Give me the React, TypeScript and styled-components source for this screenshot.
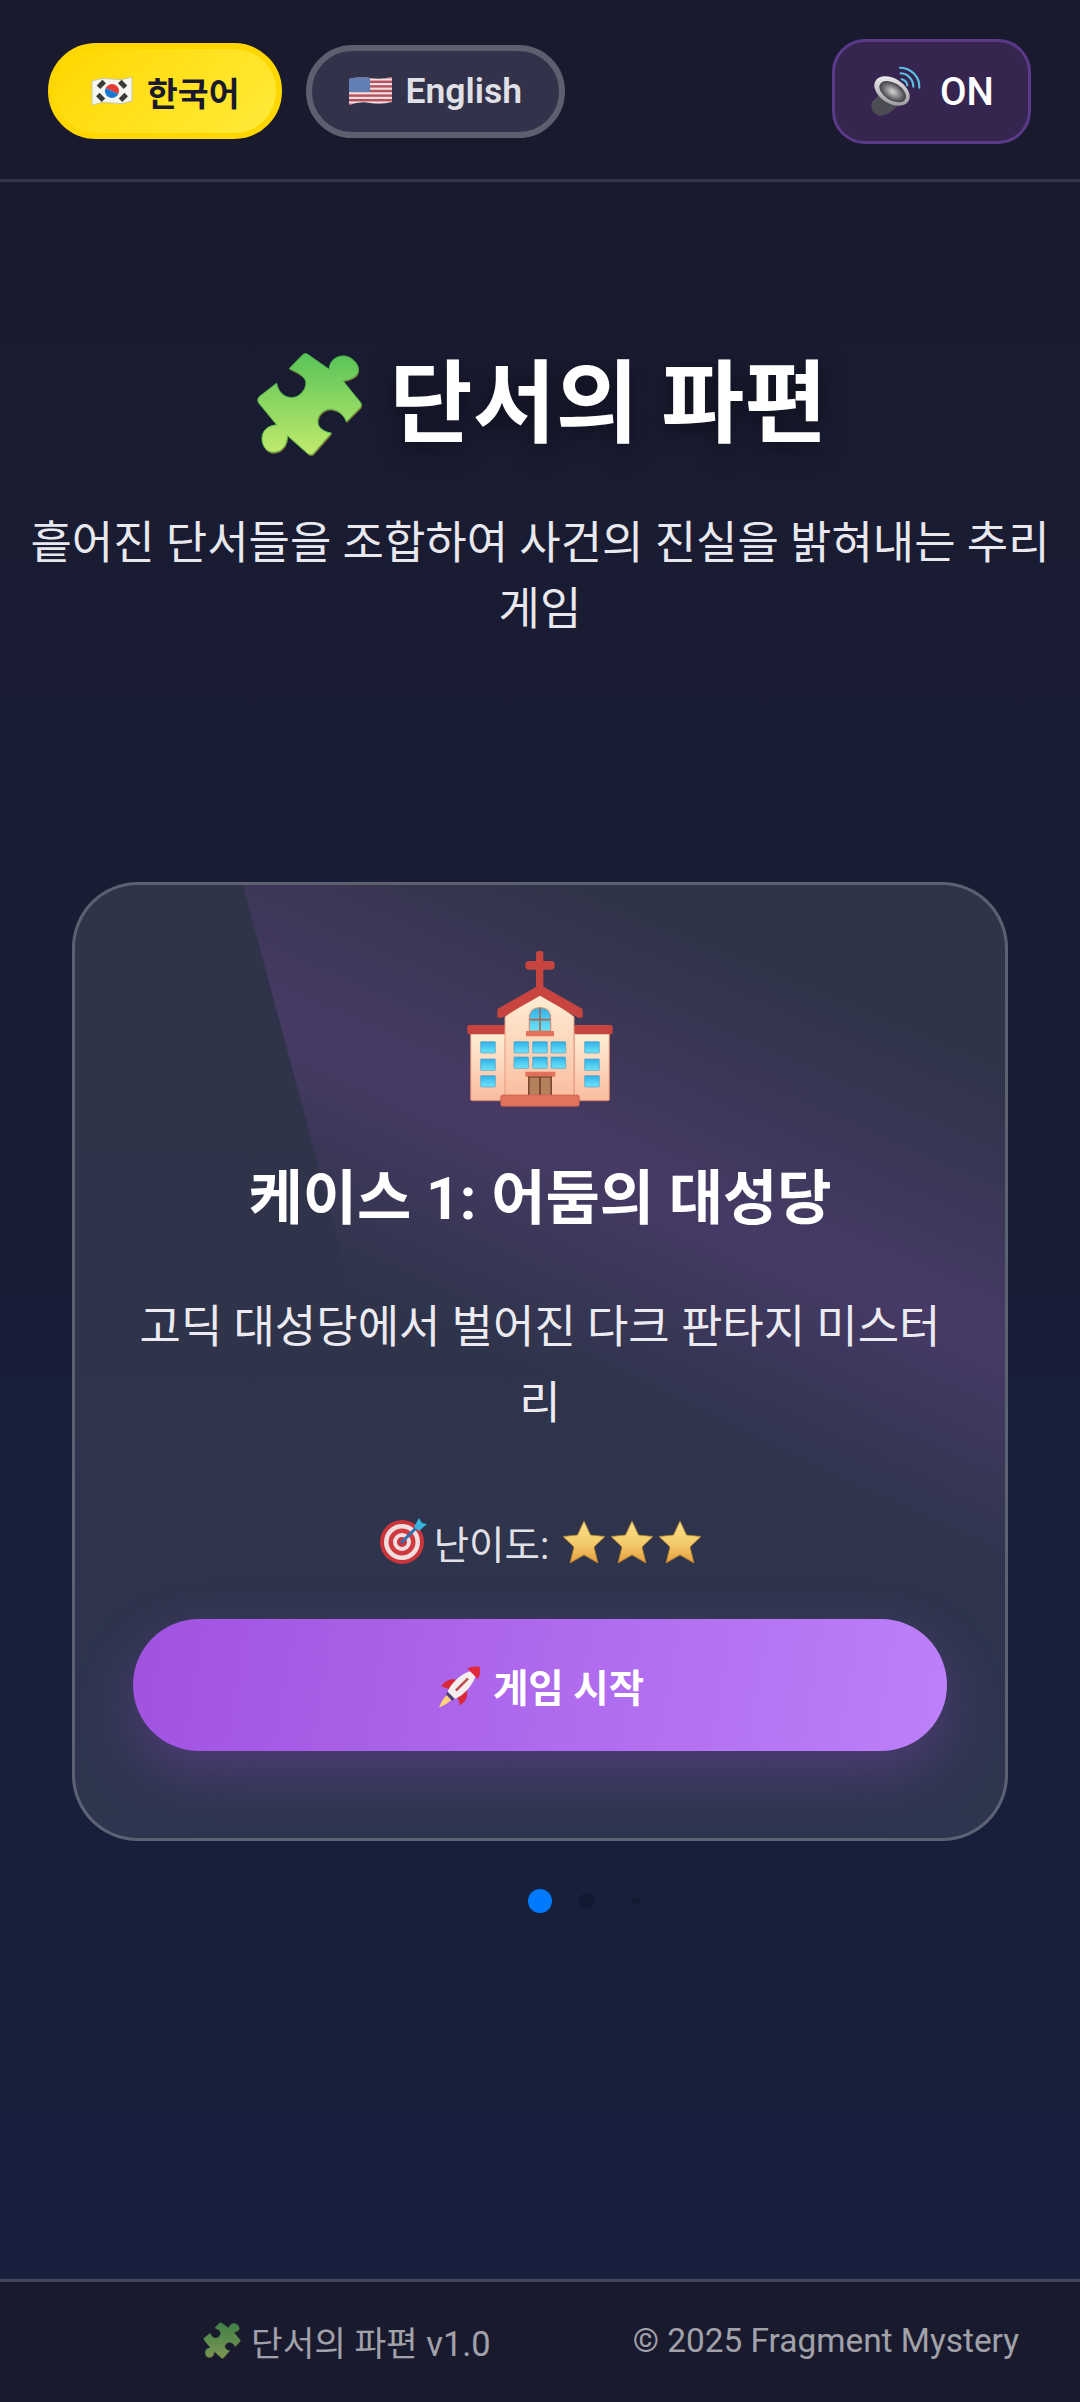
import React from 'react';
import styled, { createGlobalStyle } from 'styled-components';

const GlobalStyle = createGlobalStyle`
  html, body {
    margin: 0;
    padding: 0;
    background: #1a1a2e;
  }
  * {
    box-sizing: border-box;
  }
  body {
    font-family: Roboto, "Noto Sans CJK KR", sans-serif;
  }
`;

const Page = styled.div`
  width: 1080px;
  height: 2402px;
  display: flex;
  flex-direction: column;
  background: linear-gradient(180deg, #1a1a2e 0%, #16213e 100%);
  color: #fff;
  overflow: hidden;
`;

const Header = styled.header`
  height: 182px;
  flex-shrink: 0;
  padding: 3px 49px 0 48px;
  display: flex;
  align-items: center;
  justify-content: space-between;
  background: #1a1a2e;
  border-bottom: 3px solid #33334a;
`;

const LangGroup = styled.div`
  display: flex;
  align-items: center;
  gap: 24px;
`;

const LangButton = styled.button<{ $active?: boolean }>`
  height: ${({ $active }) => ($active ? '96px' : '93px')};
  padding: 0 37px;
  display: flex;
  align-items: center;
  gap: ${({ $active }) => ($active ? '14px' : '13px')};
  border-radius: 48px;
  font-family: inherit;
  font-size: ${({ $active }) => ($active ? '33.5px' : '35.5px')};
  font-weight: 600;
  white-space: nowrap;
  border: 6px solid ${({ $active }) => ($active ? '#ffd700' : '#5e5e6e')};
  background: ${({ $active }) =>
    $active ? 'linear-gradient(135deg, #ffd700, #ffeb3b)' : '#32324a'};
  color: ${({ $active }) => ($active ? '#1a1a2e' : '#e0e0e6')};
`;

const SoundButton = styled.button`
  width: 199px;
  height: 105px;
  padding: 0 0 0 25px;
  border-radius: 33px;
  border: 3px solid #5a3a8a;
  background: #36264f;
  color: #fff;
  font-family: inherit;
  font-size: 38.5px;
  font-weight: 500;
  display: flex;
  align-items: center;
  gap: 10px;
`;

const Art = styled.svg<{ $w: number; $h: number; $dim?: boolean }>`
  width: ${({ $w }) => $w}px;
  height: ${({ $h }) => $h}px;
  flex-shrink: 0;
  display: block;
  opacity: ${({ $dim }) => ($dim ? 0.6 : 1)};
`;

const Main = styled.main`
  flex: 1;
  display: flex;
  flex-direction: column;
  align-items: center;
`;

const Title = styled.h1`
  margin: 164px 0 0 3px;
  display: flex;
  align-items: center;
  gap: 27px;
  font-size: 90.3px;
  line-height: 116px;
  font-weight: 700;
  text-shadow: 0 6px 22px rgba(0, 0, 0, 0.5);
`;

const Subtitle = styled.p`
  margin: 49px 0 0;
  padding: 0 27px;
  width: 100%;
  font-size: 45px;
  line-height: 66px;
  text-align: center;
  color: #e8e8ee;
`;

const Card = styled.section`
  position: relative;
  width: 936px;
  height: 959px;
  margin-top: 239px;
  padding: 60px 58px 0;
  display: flex;
  flex-direction: column;
  align-items: center;
  border: 3px solid rgba(255, 255, 255, 0.22);
  border-radius: 66px;
  background: rgba(255, 255, 255, 0.1);
  overflow: hidden;

  &::before {
    content: '';
    position: absolute;
    left: 336px;
    top: -472px;
    width: 1500px;
    height: 2000px;
    transform: rotate(-15deg);
    background: linear-gradient(
      39deg,
      transparent 41.5%,
      rgba(155, 80, 200, 0.22) 50%,
      transparent 60%
    );
  }
`;

const CardBody = styled.div`
  position: relative;
  width: 100%;
  display: flex;
  flex-direction: column;
  align-items: center;
`;

const CaseTitle = styled.h2`
  margin: 44px 0 0;
  font-size: 59px;
  line-height: 80px;
  font-weight: 700;
`;

const CaseText = styled.p`
  margin: 51px 0 0;
  font-size: 45px;
  line-height: 76px;
  text-align: center;
  color: #ecebf1;
`;

const Difficulty = styled.div`
  margin-top: 70px;
  height: 60px;
  display: flex;
  align-items: center;
  font-size: 38.5px;
  color: #e0e0e6;
`;

const DifficultyLabel = styled.span`
  margin: 0 13px 0 6px;
`;

const Stars = styled.div`
  display: flex;
  gap: 4px;
`;

const StartButton = styled.button`
  width: 814px;
  height: 132px;
  margin-top: 47px;
  display: flex;
  align-items: center;
  justify-content: center;
  gap: 12px;
  border: none;
  border-radius: 66px;
  background: linear-gradient(100deg, #a052e0 0%, #bd80fa 100%);
  box-shadow: 0 22px 60px rgba(155, 80, 220, 0.3);
  color: #fff;
  font-family: inherit;
  font-size: 38.5px;
  font-weight: 700;
`;

const Dots = styled.div`
  margin-top: 48px;
  width: 100%;
  height: 24px;
  padding-left: 528px;
  display: flex;
  align-items: center;
`;

const Dot = styled.span<{ $size: number; $color: string; $gap: number }>`
  width: ${({ $size }) => $size}px;
  height: ${({ $size }) => $size}px;
  margin-right: ${({ $gap }) => $gap}px;
  border-radius: 50%;
  background: ${({ $color }) => $color};
`;

const Footer = styled.footer`
  height: 123px;
  flex-shrink: 0;
  padding: 0 61px 3px 0;
  display: flex;
  align-items: center;
  justify-content: flex-end;
  gap: 142px;
  background: #1a1a2e;
  border-top: 3px solid #454560;
  font-size: 33.4px;
  color: rgba(255, 255, 255, 0.6);
`;

const FooterBrand = styled.div`
  display: flex;
  align-items: center;
  gap: 10px;
  font-size: 34.4px;
`;

const PUZZLE =
  'M118 68 L160 25 Q168 20 175 26 L238 70 C240 40 265 28 285 30 C315 35 335 65 322 85 C310 100 290 102 280 105 L333 170 Q338 178 332 185 L290 228 C282 205 262 190 240 190 C215 192 200 215 205 235 C210 250 225 258 245 262 L190 325 Q183 330 175 325 L113 270 C112 300 95 320 70 320 C45 320 30 290 38 265 C45 245 65 238 80 237 L25 170 Q20 160 28 152 L80 112 C85 140 105 155 125 155 C150 155 170 130 168 108 C165 90 140 78 118 68 Z';

function PuzzleIcon({ w, h, dim }: { w: number; h: number; dim?: boolean }) {
  return (
    <Art $w={w} $h={h} $dim={dim} viewBox="18 18 322 316">
      <defs>
        <linearGradient id="puzzleFill" x1="0" y1="0" x2="0" y2="1">
          <stop offset="0" stopColor="#58c458" />
          <stop offset="1" stopColor="#c2ea6c" />
        </linearGradient>
      </defs>
      <path d={PUZZLE} fill="#8f6a2e" transform="translate(2 4)" />
      <path d={PUZZLE} fill="url(#puzzleFill)" stroke="#4fb54f" strokeWidth="3" />
    </Art>
  );
}

function KoreaFlag() {
  return (
    <Art $w={42} $h={30} viewBox="0 0 42 30">
      <path d="M1 5 Q11 1 21 3 Q32 5 41 1 V25 Q32 29 21 27 Q11 25 1 29 Z" fill="#f6f6f0" stroke="#c9c7a0" />
      <path d="M14 15 A7 7 0 0 1 28 15 Z" fill="#e53935" transform="rotate(25 21 15)" />
      <path d="M14 15 A7 7 0 0 0 28 15 Z" fill="#1976d2" transform="rotate(25 21 15)" />
      <g fill="#3a3a3a">
        <rect x="6" y="6" width="8" height="5" transform="rotate(-45 10 8)" />
        <rect x="28" y="6" width="8" height="5" transform="rotate(45 32 8)" />
        <rect x="6" y="19" width="8" height="5" transform="rotate(45 10 21)" />
        <rect x="28" y="19" width="8" height="5" transform="rotate(-45 32 21)" />
      </g>
    </Art>
  );
}

function UsFlag() {
  const stripes = [0, 4.6, 9.2, 13.8, 18.4, 23, 27.6];
  return (
    <Art $w={43} $h={30} viewBox="0 0 43 30">
      <defs>
        <clipPath id="usWave">
          <path d="M0 3 Q11 0 21 2 Q32 4 43 1 V26 Q32 29 21 27 Q11 25 0 29 Z" />
        </clipPath>
      </defs>
      <g clipPath="url(#usWave)">
        <rect width="43" height="30" fill="#ecdfe2" />
        {stripes.map((y) => (
          <rect key={y} y={y} width="43" height="2.4" fill="#b8505c" />
        ))}
        <rect width="21" height="16" fill="#5f7fb5" />
      </g>
    </Art>
  );
}

function SpeakerIcon() {
  return (
    <Art $w={70} $h={70} viewBox="0 0 210 210">
      <defs>
        <linearGradient id="speakerRim" x1="0" y1="0" x2="1" y2="1">
          <stop offset="0" stopColor="#fafafa" />
          <stop offset="1" stopColor="#8c8c92" />
        </linearGradient>
        <radialGradient id="speakerCone">
          <stop offset="0" stopColor="#d6d6d6" />
          <stop offset="1" stopColor="#3e3e44" />
        </radialGradient>
      </defs>
      <path d="M64 110 L36 138 Q28 170 60 180 Q86 178 112 150 Z" fill="#4c4c54" />
      <ellipse cx="96" cy="105" rx="58" ry="37" transform="rotate(32 96 105)" fill="url(#speakerRim)" />
      <ellipse cx="98" cy="107" rx="44" ry="26" transform="rotate(32 98 107)" fill="url(#speakerCone)" />
      <g fill="none" stroke="#5cc6e8" strokeWidth="6" strokeLinecap="round">
        <path d="M125 70 A22 22 0 0 1 142 88" />
        <path d="M122 52 A40 40 0 0 1 160 92" />
        <path d="M120 35 A58 58 0 0 1 178 95" />
      </g>
    </Art>
  );
}

function ChurchIcon() {
  const blue = { fill: 'url(#glass)', stroke: '#4f9fc4', strokeWidth: 2 };
  const sideRows = [290, 342, 392];
  const midCols = [192, 248, 303];
  return (
    <Art $w={180} $h={170} viewBox="0 0 540 510">
      <defs>
        <linearGradient id="wall" x1="0" y1="0" x2="0" y2="1">
          <stop offset="0" stopColor="#fdeed6" />
          <stop offset="1" stopColor="#fbbd9f" />
        </linearGradient>
        <linearGradient id="glass" x1="0" y1="0" x2="0" y2="1">
          <stop offset="0" stopColor="#2fb0e6" />
          <stop offset="1" stopColor="#6fe4fb" />
        </linearGradient>
      </defs>
      <rect x="258" y="18" width="22" height="112" rx="8" fill="#c8453f" />
      <rect x="226" y="48" width="88" height="26" rx="11" fill="#c8453f" />
      <rect x="62" y="262" width="106" height="205" rx="4" fill="url(#wall)" stroke="#d9806a" strokeWidth="3" />
      <rect x="372" y="262" width="106" height="205" rx="4" fill="url(#wall)" stroke="#d9806a" strokeWidth="3" />
      <rect x="52" y="240" width="116" height="28" rx="6" fill="#c8453f" />
      <rect x="372" y="240" width="116" height="28" rx="6" fill="#c8453f" />
      <path d="M165 215 L270 140 L372 215 V460 H165 Z" fill="url(#wall)" stroke="#e59a7c" strokeWidth="3" />
      <path d="M142 192 L262 124 Q270 119 278 124 L398 192 V218 L385 218 L270 152 L155 218 H142 Z" fill="#c8453f" />
      <path d="M238 258 V220 Q238 188 270 188 Q302 188 302 220 V258 Z" fill="url(#glass)" stroke="#c98a6a" strokeWidth="3" />
      <path d="M270 188 V258 M238 224 H302" stroke="#a8694f" strokeWidth="5" />
      <rect x="228" y="258" width="84" height="16" rx="2" fill="#e2725b" />
      {sideRows.map((y) => (
        <rect key={`l${y}`} x="92" y={y} width="44" height="34" rx="2" {...blue} />
      ))}
      {sideRows.map((y) => (
        <rect key={`r${y}`} x="404" y={y} width="44" height="34" rx="2" {...blue} />
      ))}
      {midCols.map((x) => (
        <rect key={`a${x}`} x={x} y="290" width="44" height="34" rx="2" {...blue} />
      ))}
      {midCols.map((x) => (
        <rect key={`b${x}`} x={x} y="336" width="44" height="34" rx="2" {...blue} />
      ))}
      <rect x="226" y="380" width="90" height="15" rx="2" fill="#e2725b" />
      <rect x="234" y="394" width="72" height="58" fill="#7a4a30" />
      <rect x="239" y="398" width="28" height="54" fill="#b5805c" />
      <rect x="273" y="398" width="28" height="54" fill="#b5805c" />
      <rect x="152" y="450" width="236" height="34" rx="6" fill="#e2725b" stroke="#c65a46" strokeWidth="2" />
    </Art>
  );
}

function TargetIcon() {
  return (
    <Art $w={50} $h={50} viewBox="0 0 50 50">
      <circle cx="24" cy="25" r="22" fill="#c9353a" />
      <circle cx="24" cy="25" r="18" fill="#f1dfe0" />
      <circle cx="24" cy="25" r="13.5" fill="#cf3a40" />
      <circle cx="24" cy="25" r="9" fill="#f1dfe0" />
      <circle cx="24" cy="25" r="5" fill="#c9353a" />
      <path d="M24 25 L40 9" stroke="#2f6fb0" strokeWidth="3" strokeLinecap="round" />
      <path d="M36 10 L41 1 L44 6 L49 7 L41 14 Z" fill="#38b4e0" />
    </Art>
  );
}

function StarIcon() {
  return (
    <Art $w={44} $h={44} viewBox="0 0 44 44">
      <defs>
        <linearGradient id="starFill" x1="0" y1="0" x2="0" y2="1">
          <stop offset="0" stopColor="#f9e48a" />
          <stop offset="0.6" stopColor="#f2c766" />
          <stop offset="1" stopColor="#e39a3e" />
        </linearGradient>
      </defs>
      <path
        d="M22 1 L28.5 15 L43 16.5 L32 27 L36 43 L22 35 L8 43 L12 27 L1 16.5 L15.5 15 Z"
        fill="url(#starFill)"
        stroke="#b07d2b"
        strokeWidth="0.8"
      />
    </Art>
  );
}

function RocketIcon() {
  return (
    <Art $w={45} $h={60} viewBox="38 0 136 180">
      <g transform="translate(115 90) rotate(45)">
        <path d="M-10 54 H10 C10 72 3 88 0 96 C-3 88 -10 72 -10 54 Z" fill="#ffd27a" />
        <path d="M-22 0 C-42 10 -44 34 -40 46 L-12 32 Z" fill="#d8283a" />
        <path d="M22 0 C42 10 44 34 40 46 L12 32 Z" fill="#d8283a" />
        <rect x="-14" y="40" width="28" height="13" fill="#4a3f6b" />
        <path d="M0 -62 C26 -40 28 20 15 44 H-15 C-28 20 -26 -40 0 -62 Z" fill="#f4eeee" />
        <path d="M0 -78 C12 -70 20 -58 23 -48 H-23 C-20 -58 -12 -70 0 -78 Z" fill="#e02a3c" />
        <rect x="-4" y="-28" width="8" height="52" rx="2" fill="#c0504d" />
      </g>
    </Art>
  );
}

export default function App() {
  return (
    <Page>
      <GlobalStyle />
      <Header>
        <LangGroup>
          <LangButton $active>
            <KoreaFlag />
            한국어
          </LangButton>
          <LangButton>
            <UsFlag />
            English
          </LangButton>
        </LangGroup>
        <SoundButton>
          <SpeakerIcon />
          ON
        </SoundButton>
      </Header>
      <Main>
        <Title>
          <PuzzleIcon w={107} h={105} />
          단서의 파편
        </Title>
        <Subtitle>흩어진 단서들을 조합하여 사건의 진실을 밝혀내는 추리 게임</Subtitle>
        <Card>
          <CardBody>
            <ChurchIcon />
            <CaseTitle>케이스 1: 어둠의 대성당</CaseTitle>
            <CaseText>고딕 대성당에서 벌어진 다크 판타지 미스터리</CaseText>
            <Difficulty>
              <TargetIcon />
              <DifficultyLabel>난이도:</DifficultyLabel>
              <Stars>
                <StarIcon />
                <StarIcon />
                <StarIcon />
              </Stars>
            </Difficulty>
            <StartButton>
              <RocketIcon />
              게임 시작
            </StartButton>
          </CardBody>
        </Card>
        <Dots>
          <Dot $size={24} $color="#007bff" $gap={27} />
          <Dot $size={16} $color="#101a30" $gap={37} />
          <Dot $size={8} $color="#101a30" $gap={0} />
        </Dots>
      </Main>
      <Footer>
        <FooterBrand>
          <PuzzleIcon w={38} h={37} dim />
          단서의 파편 v1.0
        </FooterBrand>
        <span>© 2025 Fragment Mystery</span>
      </Footer>
    </Page>
  );
}
